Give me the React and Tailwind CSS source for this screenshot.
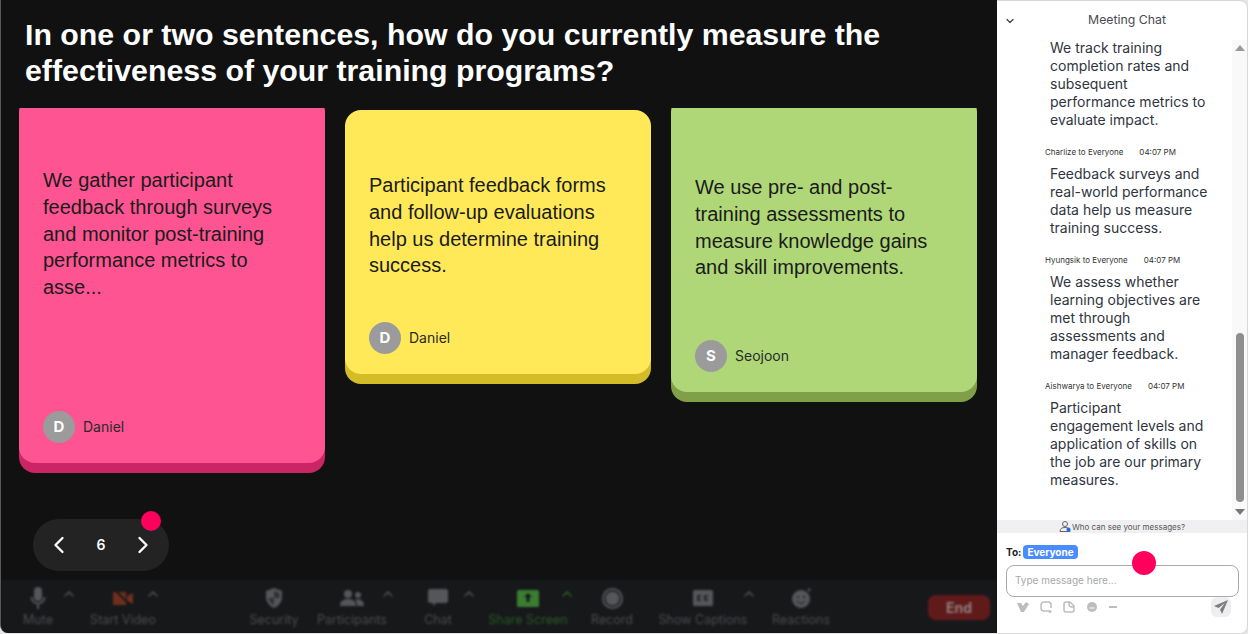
import { ChevronDown, ChevronLeft, ChevronRight, ChevronUp } from "lucide-react";

const notes = [
  {
    text: "We gather participant feedback through surveys and monitor post-training performance metrics to asse...",
    name: "Daniel",
    box: "-mt-3 h-[367px] bg-[#ff5492] shadow-[0_10px_0_#cc2565] pt-[71px]",
    gap: "h-[110px]",
  },
  {
    text: "Participant feedback forms and follow-up evaluations help us determine training success.",
    name: "Daniel",
    box: "mt-0.5 h-[264px] bg-[#ffe959] shadow-[0_10px_0_#d4bc27] pt-[62px]",
    gap: "h-[43px]",
  },
  {
    text: "We use pre- and post-training assessments to measure knowledge gains and skill improvements.",
    name: "Seojoon",
    box: "-mt-3 h-[296px] bg-[#afd778] shadow-[0_10px_0_#7f9f48] pt-[78px]",
    gap: "h-[59px]",
  },
];

const messages = [
  { from: "Charlize to Everyone", time: "04:07 PM", text: "Feedback surveys and real-world performance data help us measure training success." },
  { from: "Hyungsik to Everyone", time: "04:07 PM", text: "We assess whether learning objectives are met through assessments and manager feedback." },
  { from: "Aishwarya to Everyone", time: "04:07 PM", text: "Participant engagement levels and application of skills on the job are our primary measures.", narrow: true },
];

function Note({ note }) {
  return (
    <div className={`w-[306px] shrink-0 rounded-[16px] px-6 ${note.box}`}>
      <p className="font-['Liberation_Sans',sans-serif] text-[20px] leading-[26.8px] text-[#1b1b1b]">{note.text}</p>
      <div className={note.gap} />
      <div className="flex items-center gap-2">
        <div className="flex h-8 w-8 items-center justify-center rounded-full bg-[#9b9b9b] text-[15px] font-bold text-white">
          {note.name[0]}
        </div>
        <span className="text-sm text-[#2a2a2a]">{note.name}</span>
      </div>
    </div>
  );
}

function ToolItem({ icon, label, box, caret, green }) {
  return (
    <div className={`flex shrink-0 items-start ${box}`}>
      <div className="flex min-w-0 flex-1 flex-col items-center">
        <div className="flex h-[28px] items-center">{icon}</div>
        <span className={`whitespace-nowrap text-[12.5px] leading-4 ${green ? "text-[#2a5a26]" : "text-[#4b4c4f]"}`}>{label}</span>
      </div>
      {caret && <ChevronUp size={16} strokeWidth={2.5} className={`mt-[2px] shrink-0 ${green ? "text-[#2a5a26]" : "text-[#4b4c4f]"}`} />}
    </div>
  );
}

function Toolbar() {
  const c = "#55565a";
  return (
    <div className="flex h-[53px] items-start rounded-bl-lg bg-[#17181a] pt-1 blur-[1.2px]">
      <ToolItem
        box="ml-[14px] w-[62px]"
        caret
        label="Mute"
        icon={
          <svg width="18" height="24" viewBox="0 0 18 24" fill={c}>
            <rect x="5" y="1" width="8" height="14" rx="4" />
            <path d="M1.5 11a7.5 7.5 0 0 0 15 0h-2a5.5 5.5 0 0 1-11 0zM8 18h2v5H8z" />
          </svg>
        }
      />
      <ToolItem
        box="ml-6 w-[60px]"
        caret
        label="Start Video"
        icon={
          <svg width="22" height="20" viewBox="0 0 22 20" fill="#6f2f1c">
            <path d="M1 4h13v13H1zM15 8l6-3v11l-6-3z" />
            <path d="M2 1l18 18" stroke="#17181a" strokeWidth="2" />
          </svg>
        }
      />
      <ToolItem
        box="ml-[89px] w-12"
        label="Security"
        icon={
          <svg width="20" height="22" viewBox="0 0 20 22" fill={c}>
            <path d="M10 1l8 3v6c0 5-3.5 9-8 11-4.5-2-8-6-8-11V4z" />
            <path d="M10 4v7H4.5c.5 3 2.5 5.5 5.5 7v-7h5.5V6z" fill="#17181a" opacity=".6" />
          </svg>
        }
      />
      <ToolItem
        box="ml-[26px] w-[72px]"
        caret
        label="Participants"
        icon={
          <svg width="24" height="18" viewBox="0 0 24 18" fill={c}>
            <circle cx="8" cy="5" r="4" />
            <circle cx="18" cy="6" r="3" />
            <path d="M0 17c0-5 3-7 8-7s8 2 8 7zM17 17c0-3-.5-5-2-6.5 4-1 9 0 9 6.5z" />
          </svg>
        }
      />
      <ToolItem
        box="ml-[19px] w-[62px]"
        caret
        label="Chat"
        icon={
          <svg width="22" height="20" viewBox="0 0 22 20" fill={c}>
            <path d="M3 1h16a2 2 0 0 1 2 2v10a2 2 0 0 1-2 2H9l-3 3v-3H3a2 2 0 0 1-2-2V3a2 2 0 0 1 2-2z" />
          </svg>
        }
      />
      <ToolItem
        box="ml-5 w-[78px]"
        caret
        green
        label="Share Screen"
        icon={
          <svg width="22" height="17" viewBox="0 0 22 17">
            <rect width="22" height="17" rx="1.5" fill="#3a7d31" />
            <path d="M11 3l4 4h-2.5v5h-3V7H7z" fill="#17181a" />
          </svg>
        }
      />
      <ToolItem
        box="ml-[15px] w-11"
        label="Record"
        icon={
          <svg width="21" height="21" viewBox="0 0 21 21">
            <circle cx="10.5" cy="10.5" r="9.5" fill="none" stroke={c} strokeWidth="2" />
            <circle cx="10.5" cy="10.5" r="7" fill={c} />
          </svg>
        }
      />
      <ToolItem
        box="ml-[31px] w-[92px]"
        caret
        label="Show Captions"
        icon={
          <svg width="20" height="16" viewBox="0 0 20 16">
            <rect width="20" height="16" rx="1.5" fill={c} />
            <path d="M8 6H5v4h3M15 6h-3v4h3" fill="none" stroke="#17181a" strokeWidth="1.5" />
          </svg>
        }
      />
      <ToolItem
        box="ml-5 w-12"
        label="Reactions"
        icon={
          <svg width="21" height="21" viewBox="0 0 21 21">
            <circle cx="10" cy="11" r="9" fill={c} />
            <circle cx="7" cy="9" r="1" fill="#17181a" />
            <circle cx="13" cy="9" r="1" fill="#17181a" />
            <path d="M6 13a4.5 4.5 0 0 0 8 0" fill="none" stroke="#17181a" />
            <path d="M18 0v4M16 2h4" stroke={c} />
          </svg>
        }
      />
      <div className="ml-[103px] mt-[11px] flex h-[25px] w-[62px] items-center justify-center rounded-lg bg-[#611a1a] text-sm font-bold text-[#8f7f7f]">
        End
      </div>
    </div>
  );
}

function Composer() {
  const c = "#bdbdbd";
  return (
    <div className="relative h-[100px] pl-[9px] pr-2 pt-3">
      <div className="flex items-center gap-0.5 text-[10px] font-bold leading-[14px] text-[#222]">
        To:
        <span className="rounded bg-[#4a8cff] px-1 text-[10px] text-white">Everyone</span>
      </div>
      <div className="mt-1.5 h-8 rounded-lg border border-[#aaa] px-2 text-[10px] leading-[28px] text-[#a8a8a8]">
        Type message here...
      </div>
      <div className="flex items-center justify-between pr-2">
        <div className="ml-[11px] flex items-center gap-[11px] blur-[0.5px]">
          <svg width="12" height="12" viewBox="0 0 12 12" fill={c}>
            <path d="M0 2h4l2 3 3-4 3 2-5 8H4z" />
          </svg>
          <svg width="12" height="12" viewBox="0 0 12 12" fill="none" stroke={c} strokeWidth="1.5">
            <path d="M9 10H4a3 3 0 0 1-3-3V4a3 3 0 0 1 3-3h4a3 3 0 0 1 3 3v3M10 9v3M8.5 10.5h3" />
          </svg>
          <svg width="12" height="12" viewBox="0 0 12 12" fill="none" stroke={c} strokeWidth="1.5">
            <path d="M3 1h4l4 4v4a2 2 0 0 1-2 2H3a2 2 0 0 1-2-2V3a2 2 0 0 1 2-2zM6 1v2a3 3 0 0 0 3 3h2" />
          </svg>
          <svg width="12" height="12" viewBox="0 0 12 12">
            <circle cx="6" cy="6" r="5" fill={c} />
            <path d="M3.5 7h5" stroke="#fff" />
          </svg>
          <div className="h-0.5 w-2 bg-[#bdbdbd]" />
        </div>
        <div className="flex h-[20px] w-[20px] items-center justify-center rounded-md bg-[#eeeef1]">
          <svg width="14" height="14" viewBox="0 0 14 14" fill="#7d7d7d">
            <path d="M14 0L0 6l4.5 2L11 3 6 9.5 8 14z" />
          </svg>
        </div>
      </div>
    </div>
  );
}

export default function App() {
  return (
    <div className="relative flex h-[634px] w-[1248px] overflow-hidden bg-[#e6e6e6] font-['Inter',sans-serif]">
      <main className="mb-px flex w-[997px] flex-col overflow-hidden rounded-bl-lg border-l border-[#5a5a5a] bg-[#111112]">
        <h1 className="px-6 pt-[17px] font-['Liberation_Sans',sans-serif] text-[30.3px] font-bold leading-[36px] text-white">
          In one or two sentences, how do you currently measure the effectiveness of your training programs?
        </h1>
        <div className="mt-[19px] flex h-[472px] items-start gap-5 overflow-hidden px-[18px]">
          {notes.map((note, i) => (
            <Note key={i} note={note} />
          ))}
        </div>
        <Toolbar />
      </main>

      <aside className="flex w-[251px] flex-col rounded-r-lg border-y border-r border-[#d8d8d8] bg-white">
        <header className="relative flex h-[39px] shrink-0 items-center justify-center text-[12.3px] text-[#4a4a55]">
          <ChevronDown size={12} strokeWidth={2.5} className="absolute left-[7px] top-[14px] text-[#444]" />
          <span className="ml-2.5">Meeting Chat</span>
        </header>
        <div className="flex h-[480px] shrink-0">
          <div className="flex-1 overflow-hidden pl-[53px] pr-[22px] text-[14px] leading-[18px] text-[#2f3540]">
            <p className="-mt-[1px] mb-[18px]">We track training completion rates and subsequent performance metrics to evaluate impact.</p>
            {messages.map((m) => (
              <div key={m.from} className="mb-[18px]">
                <div className="-ml-[5px] mb-2 flex h-[10px] items-center gap-[16px] whitespace-nowrap text-[8px] text-[#333]">
                  <span>{m.from}</span>
                  <span>{m.time}</span>
                </div>
                <p className={m.narrow ? "max-w-[155px]" : ""}>{m.text}</p>
              </div>
            ))}
          </div>
          <div className="relative w-[15px] shrink-0 bg-[#f9f9f9]">
            <div className="absolute left-[3px] top-[5px] h-0 w-0 border-x-[5px] border-b-[6px] border-x-transparent border-b-[#999]" />
            <div className="absolute left-[4px] top-[293px] h-[169px] w-2 rounded-full bg-[#8f8f8f]" />
            <div className="absolute bottom-[5px] left-[3px] h-0 w-0 border-x-[5px] border-t-[6px] border-x-transparent border-t-[#777]" />
          </div>
        </div>
        <div className="flex h-[13px] shrink-0 items-center justify-center bg-[#f0f0f2] text-[8px] text-[#555]">
          <svg width="12" height="11" viewBox="0 0 12 11" fill="none" stroke="#666" className="mr-px">
            <circle cx="6" cy="3" r="2.5" />
            <path d="M1 10.5c0-3 2-4 5-4s5 1 5 4z" />
            <circle cx="9.5" cy="8.5" r="2" fill="#1a6ef5" stroke="none" />
          </svg>
          Who can see your messages?
        </div>
        <Composer />
      </aside>

      {/* pager and pointer dots sit over the slide */}
      <div className="absolute left-[33px] top-[519px] flex h-[52px] w-[136px] items-center justify-between rounded-full bg-[#232323] px-3 text-white">
        <ChevronLeft size={28} strokeWidth={2} />
        <span className="text-sm font-semibold">6</span>
        <ChevronRight size={28} strokeWidth={2} />
      </div>
      <div className="absolute left-[141px] top-[511px] h-5 w-5 rounded-full bg-[#ff005c]" />
      <div className="absolute left-[1132px] top-[551px] h-6 w-6 rounded-full bg-[#ff005c]" />
    </div>
  );
}
